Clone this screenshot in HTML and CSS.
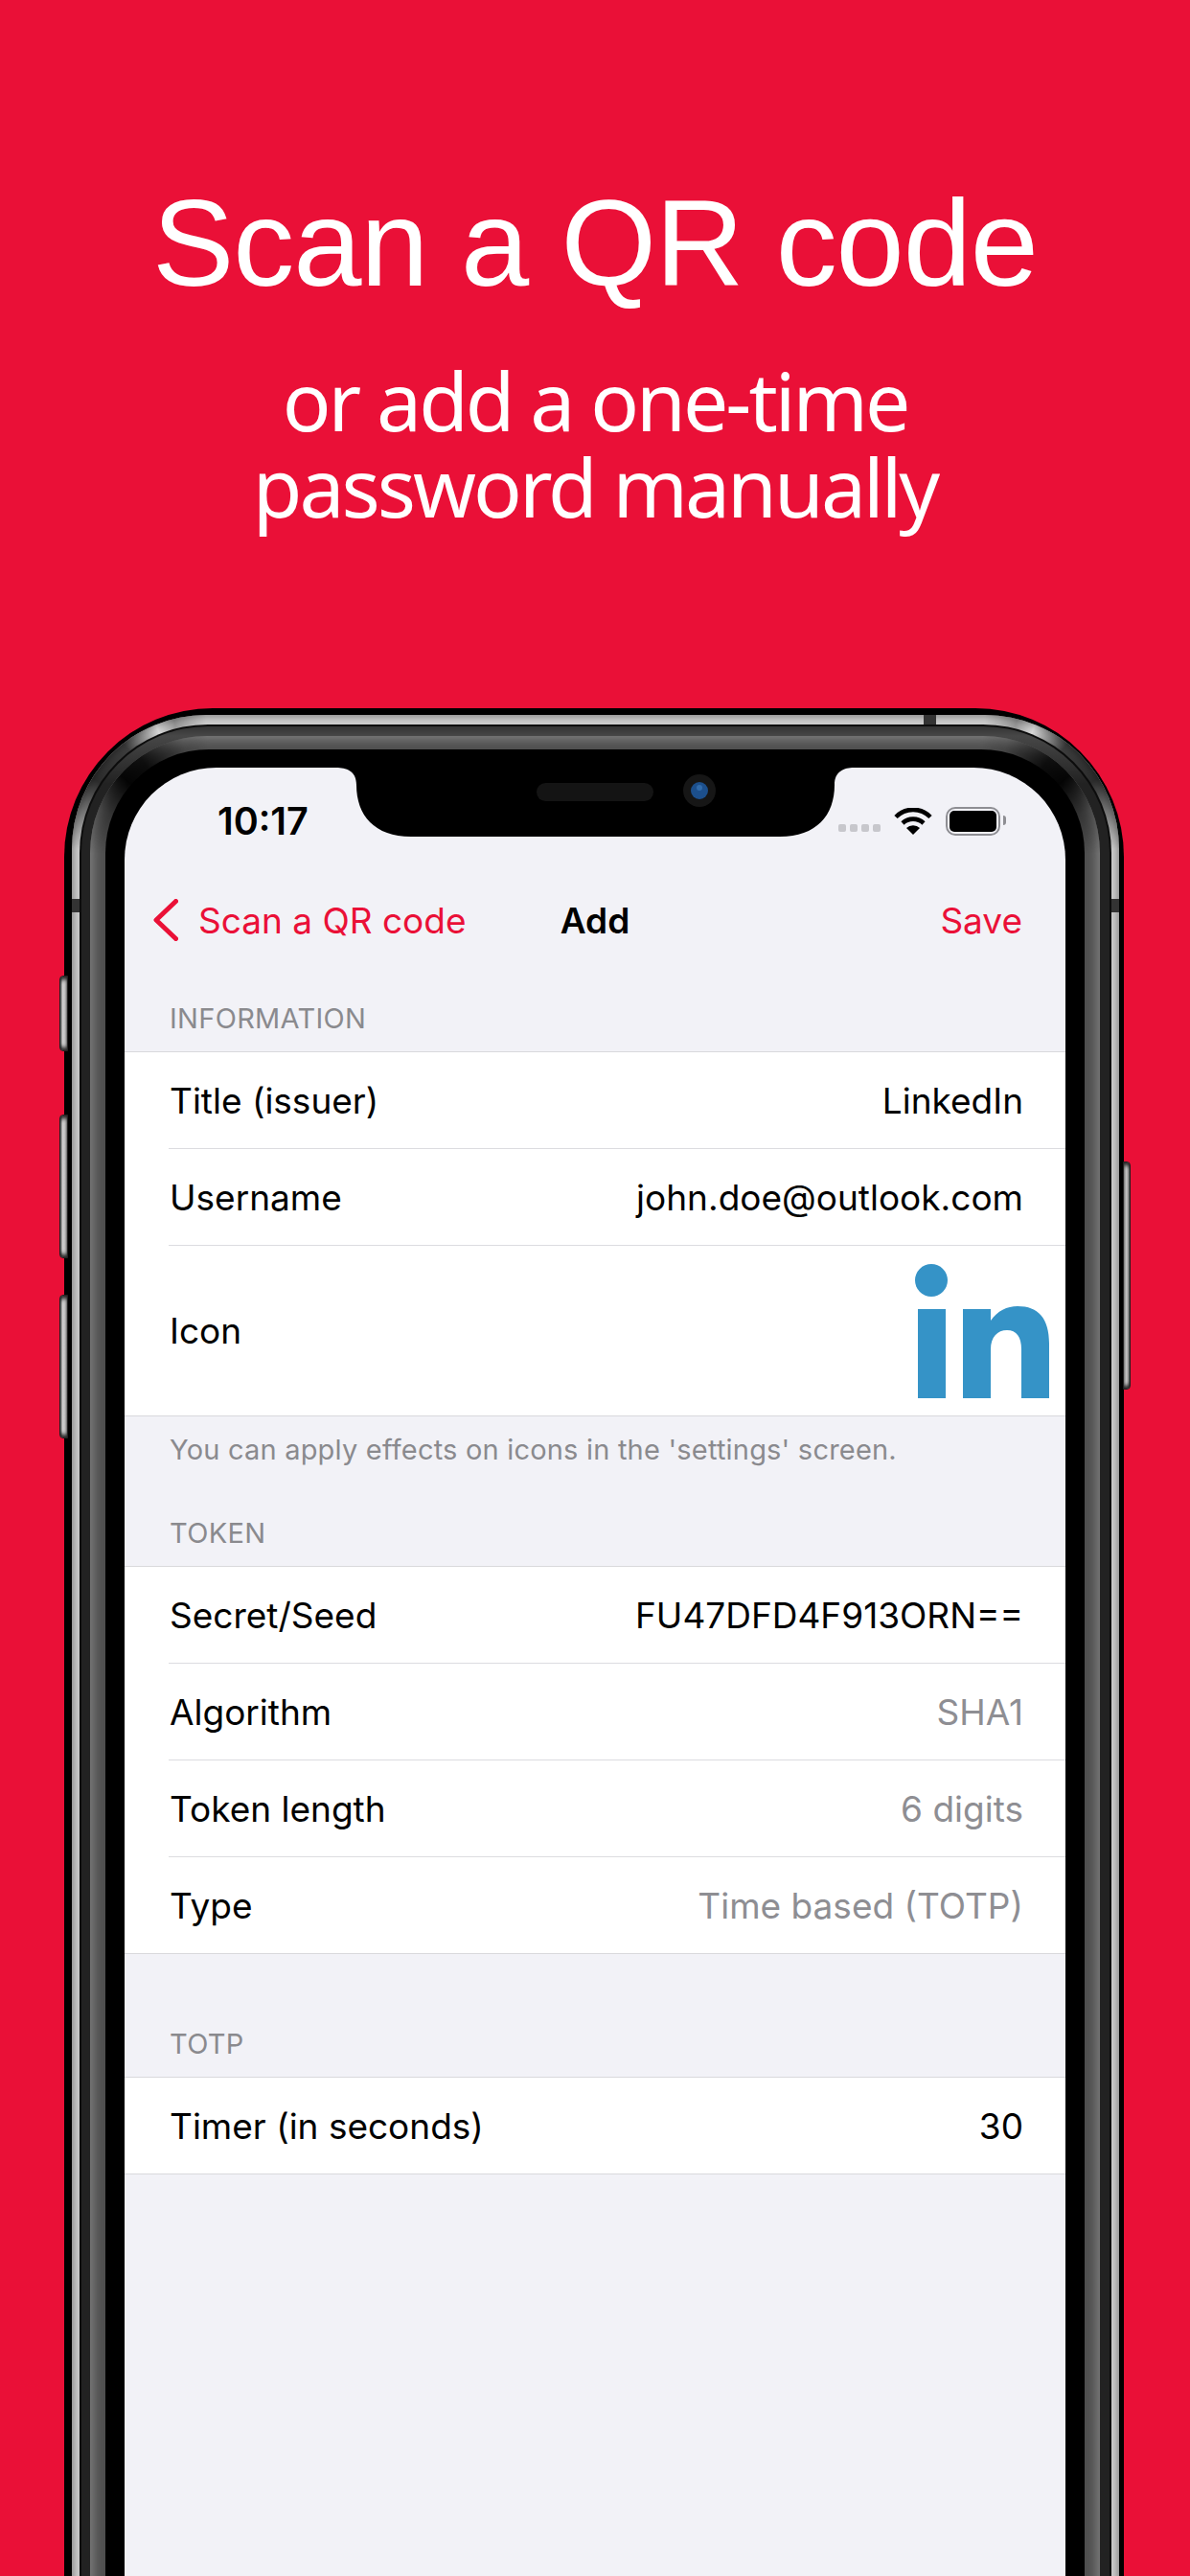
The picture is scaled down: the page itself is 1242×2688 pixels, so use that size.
FILE: index.html
```html
<!DOCTYPE html>
<html lang="en">
<head>
<meta charset="utf-8">
<title>Scan a QR code</title>
<link rel="stylesheet" href="styles.css">
</head>
<body>
<div class="page">
  <header class="hero">
    <h1 class="hero-title">Scan a QR code</h1>
    <p class="hero-sub">or add a one-time<br>password manually</p>
  </header>
  <div class="phone">
    <span class="btn btn-silent"></span>
    <span class="btn btn-up"></span>
    <span class="btn btn-down"></span>
    <span class="btn btn-power"></span>
    <span class="ant ant-left"></span>
    <span class="ant ant-right"></span>
    <span class="ant ant-top"></span>
    <div class="ring band">
      <div class="ring gap">
        <div class="ring dark">
          <div class="ring grad">
            <div class="ring bezel">
              <div class="screen">
                <svg class="notch" viewBox="0 0 540 72" width="540" height="72" aria-hidden="true">
                  <path d="M0 0C10 0 21 3 21 18C21 50 40 72 78 72H463C501 72 520 50 520 18C520 3 531 0 541 0Z" fill="#000"/>
                  <rect class="speaker" x="209" y="16" width="122" height="19" rx="9.5"/>
                  <circle cx="379" cy="24" r="17" fill="#161616"/>
                  <circle cx="379" cy="24" r="9" fill="#1c4f8c"/>
                  <circle cx="379" cy="21" r="3" fill="#3f7fc0" opacity=".6"/>
                </svg>
                <div class="status">
                  <span class="time">10:17</span>
                  <div class="status-icons">
                    <span class="dots"><i></i><i></i><i></i><i></i></span>
                    <svg class="wifi" viewBox="0 0 40 28" width="40" height="28" aria-hidden="true">
                      <path d="M2 9.5A25 25 0 0 1 38 9.5" fill="none" stroke="#000" stroke-width="4.6"/>
                      <path d="M9 16A16 16 0 0 1 31 16" fill="none" stroke="#000" stroke-width="4.6"/>
                      <path d="M20 28L13 21A10 10 0 0 1 27 21Z" fill="#000"/>
                    </svg>
                    <span class="battery"><i></i></span>
                  </div>
                </div>
                <nav class="nav">
                  <a class="nav-back">
                    <svg class="chevron" viewBox="0 0 26 44" width="26" height="44" aria-hidden="true">
                      <path d="M23.5 2.5L3 22L23.5 41.5" fill="none" stroke="#ea1037" stroke-width="5" stroke-linecap="round" stroke-linejoin="round"/>
                    </svg>
                    <span>Scan a QR code</span>
                  </a>
                  <span class="nav-title">Add</span>
                  <a class="nav-save">Save</a>
                </nav>

                <h2 class="sec-head sec-first">INFORMATION</h2>
                <ul class="list">
                  <li class="row"><span>Title (issuer)</span><span>LinkedIn</span></li>
                  <li class="row"><span>Username</span><span>john.doe@outlook.com</span></li>
                  <li class="row row-icon"><span>Icon</span>
                    <svg class="logo" viewBox="950 1311 150 155" width="150" height="155" role="img" aria-label="LinkedIn logo">
                      <circle cx="971" cy="1336" r="17"/>
                      <rect x="957" y="1366" width="29" height="93"/>
                      <path d="M1004 1366H1033V1378C1040 1368 1050 1363 1061 1363C1083 1363 1094 1376 1094 1402V1459H1065V1408C1065 1395 1060 1388 1050 1388C1040 1388 1033 1395 1033 1408V1459H1004Z"/>
                    </svg>
                  </li>
                </ul>
                <p class="sec-foot">You can apply effects on icons in the 'settings' screen.</p>

                <h2 class="sec-head sec-token">TOKEN</h2>
                <ul class="list">
                  <li class="row"><span>Secret/Seed</span><span>FU47DFD4F913ORN==</span></li>
                  <li class="row"><span>Algorithm</span><span class="muted">SHA1</span></li>
                  <li class="row"><span>Token length</span><span class="muted">6 digits</span></li>
                  <li class="row"><span>Type</span><span class="muted">Time based (TOTP)</span></li>
                </ul>

                <h2 class="sec-head sec-totp">TOTP</h2>
                <ul class="list">
                  <li class="row"><span>Timer (in seconds)</span><span>30</span></li>
                </ul>
              </div>
            </div>
          </div>
        </div>
      </div>
    </div>
  </div>
</div>
</body>
</html>
```
FILE: styles.css
```css
* { box-sizing: border-box; }
html, body { margin: 0; padding: 0; }
body { background: #ea1037; }
.page {
  width: 1242px;
  height: 2688px;
  overflow: hidden;
  background: #ea1037;
}

/* Hero */
.hero {
  height: 739px;
  padding-top: 179px;
  text-align: center;
  color: #fff;
}
.hero-title {
  margin: 0;
  font-family: "Liberation Sans", sans-serif;
  font-size: 128px;
  line-height: 150px;
  font-weight: 400;
  letter-spacing: -1.1px;
}
.hero-sub {
  margin: 44px 0 0;
  font-family: "Noto Sans", sans-serif;
  font-size: 84px;
  line-height: 90px;
  letter-spacing: -3px;
}

/* Phone body: concentric rings */
.phone {
  position: relative;
  display: flex;
  width: 1106px;
  height: 2100px;
  margin-left: 67px;
  padding: 7px 5px 0 8px;
  background: #000;
  border-radius: 155px 155px 0 0;
}
.ring { position: relative; flex: 1; display: flex; min-width: 0; }
.band {
  padding: 10px 8px 0;
  border-radius: 140px 140px 0 0;
  background: #cdcdcd;
  box-shadow: inset 0 0 9px 1px #777;
}
.band::before,
.grad::before {
  content: "";
  position: absolute;
  inset: 0;
  border-radius: inherit;
}
.band::before {
  background:
    conic-gradient(from 270deg at 140px 140px,
      rgba(0,0,0,0) 0deg, rgba(0,0,0,.78) 32deg, rgba(0,0,0,.7) 52deg,
      rgba(255,255,255,.25) 68deg, rgba(0,0,0,.25) 76deg, rgba(0,0,0,0) 90deg, rgba(0,0,0,0) 360deg),
    conic-gradient(from 0deg at calc(100% - 140px) 140px,
      rgba(0,0,0,0) 0deg, rgba(0,0,0,.25) 14deg, rgba(255,255,255,.25) 22deg,
      rgba(0,0,0,.7) 38deg, rgba(0,0,0,.78) 58deg, rgba(0,0,0,0) 90deg, rgba(0,0,0,0) 360deg);
}
.gap {
  z-index: 1;
  padding: 2px 2px 0;
  border-radius: 134px 134px 0 0;
  background: #0c0c0c;
}
.dark {
  padding: 10px 10px 0 9px;
  border-radius: 132px 132px 0 0;
  background: linear-gradient(to bottom, #333, #474747 10px, #222 60px);
}
.grad {
  padding: 14px 16px 0;
  border-radius: 122px 122px 0 0;
  background: #4e4e4e;
  box-shadow: inset 0 0 14px 2px #8c8c8c;
}
.grad::before {
  background:
    conic-gradient(from 270deg at 122px 122px,
      rgba(0,0,0,0) 0deg, rgba(0,0,0,.35) 22deg, rgba(0,0,0,.95) 42deg,
      rgba(0,0,0,.85) 55deg, rgba(0,0,0,.15) 78deg, rgba(0,0,0,0) 90deg, rgba(0,0,0,0) 360deg),
    conic-gradient(from 0deg at calc(100% - 122px) 122px,
      rgba(0,0,0,0) 0deg, rgba(0,0,0,.15) 12deg, rgba(0,0,0,.85) 35deg,
      rgba(0,0,0,.95) 48deg, rgba(0,0,0,.35) 68deg, rgba(0,0,0,0) 90deg, rgba(0,0,0,0) 360deg);
}
.bezel {
  z-index: 1;
  padding: 19px 20px 0;
  border-radius: 108px 108px 0 0;
  background: #000;
}

.btn {
  position: absolute;
  width: 9px;
  background: linear-gradient(to right, #555, #d0d0d0 35%, #bdbdbd 70%, #777);
  border: 1px solid #222;
  border-radius: 4px 0 0 4px;
  box-shadow: inset 0 6px 4px -3px #222, inset 0 -6px 4px -3px #222;
}
.btn-silent { left: -5px; top: 279px; height: 79px; }
.btn-up { left: -5px; top: 424px; height: 150px; }
.btn-down { left: -5px; top: 612px; height: 150px; }
.btn-power {
  right: -7px;
  top: 473px;
  height: 238px;
  width: 8px;
  border-radius: 0 4px 4px 0;
  background: linear-gradient(to right, #888, #c0c0c0 40%, #a8a8a8 70%, #444);
}
.ant { position: absolute; background: #333; z-index: 2; }
.ant-left { left: 8px; top: 199px; width: 8px; height: 14px; }
.ant-right { right: 5px; top: 199px; width: 8px; height: 14px; }
.ant-top { left: 897px; top: 7px; width: 13px; height: 10px; }

/* Screen */
.screen {
  position: relative;
  flex: 1;
  min-width: 0;
  background: #f2f2f7;
  border-radius: 96px 96px 0 0;
  font-family: Inter, "Liberation Sans", sans-serif;
  font-size: 37px;
  color: #000;
  overflow: hidden;
}
.notch { position: absolute; left: 221px; top: 0; }
.speaker { fill: #141414; }

.status {
  display: flex;
  justify-content: space-between;
  align-items: center;
  height: 112px;
  padding: 0 68px 0 97px;
}
.time {
  font-size: 39.5px;
  font-weight: 600;
}
.status-icons { display: flex; align-items: center; }
.dots { display: flex; gap: 4px; margin: 14px 14px 0 0; }
.dots i { width: 8px; height: 8px; border-radius: 2px; background: #c7c7cc; }
.wifi { margin-right: 14px; }
.battery {
  position: relative;
  display: block;
  width: 57px;
  height: 30px;
  padding: 2px;
  border: 2.5px solid #8e8e93;
  border-radius: 10px;
}
.battery i { display: block; height: 100%; background: #000; border-radius: 5px; }
.battery::after {
  content: "";
  position: absolute;
  right: -8px;
  top: 7px;
  width: 3px;
  height: 10px;
  background: #8e8e93;
  border-radius: 0 3px 3px 0;
}

.nav {
  display: grid;
  grid-template-columns: 1fr auto 1fr;
  align-items: center;
  height: 94px;
  padding: 0 45px;
  color: #ea1037;
}
.nav-back { display: flex; align-items: center; gap: 21px; margin-left: -15px; }
.nav-title { color: #000; font-weight: 600; }
.nav-save { justify-self: end; }

.sec-head {
  margin: 0;
  padding-left: 47px;
  font-size: 29px;
  font-weight: 400;
  line-height: 34px;
  letter-spacing: .3px;
  color: #8a8a8e;
}
.sec-first { padding-top: 39px; padding-bottom: 17px; }
.sec-token { padding-top: 53px; padding-bottom: 17px; }
.sec-totp { padding-top: 77px; padding-bottom: 17px; }

.list {
  margin: 0;
  padding: 0 0 0 46px;
  list-style: none;
  background: #fff;
  border-top: 1px solid #d9d9dc;
  border-bottom: 1px solid #d9d9dc;
}
.row {
  display: flex;
  justify-content: space-between;
  align-items: center;
  height: 101px;
  padding: 0 44px 0 1px;
  border-bottom: 1px solid #dcdce0;
}
.row:last-child { border-bottom: 0; height: 100px; }
.row-icon { height: 177px; }
.row-icon:last-child { height: 177px; }
.muted { color: #8e8e93; }
.logo { fill: #3593c7; margin-right: -33px; }

.sec-foot {
  margin: 0;
  padding: 18px 0 0 47px;
  font-size: 29px;
  line-height: 34px;
  letter-spacing: .2px;
  color: #8a8a8e;
}
```
